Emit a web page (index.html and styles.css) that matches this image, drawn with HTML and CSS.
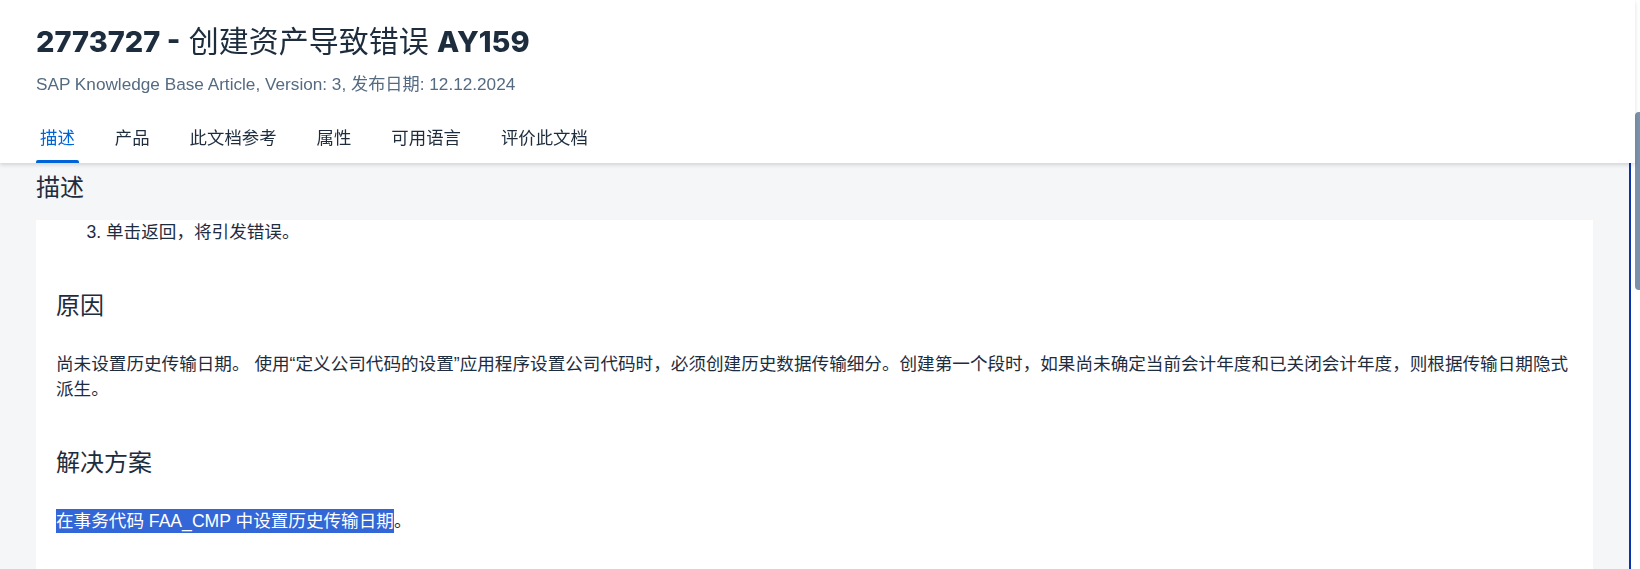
FILE: index.html
```html
<!DOCTYPE html>
<html lang="zh-CN">
<head>
    <meta charset="UTF-8">
    <title>2773727 - 创建资产导致错误 AY159</title>
    <link rel="stylesheet" href="styles.css">
</head>
<body>
    <header class="page-header">
        <h1 class="title"><span class="title-id">2773727 -</span> 创建资产导致错误 <span class="title-id">AY159</span></h1>
        <div class="subtitle">SAP Knowledge Base Article, Version: 3, 发布日期: 12.12.2024</div>
        <nav class="tabs">
            <a class="tab active">描述</a>
            <a class="tab">产品</a>
            <a class="tab">此文档参考</a>
            <a class="tab">属性</a>
            <a class="tab">可用语言</a>
            <a class="tab">评价此文档</a>
        </nav>
    </header>

    <main class="content">
        <h2 class="section-title">描述</h2>
        <div class="card">
            <ol class="steps" start="3">
                <li>单击返回，将引发错误。</li>
            </ol>

            <h3>原因</h3>
            <p>尚未设置历史传输日期。 使用“定义公司代码的设置”应用程序设置公司代码时，必须创建历史数据传输细分。创建第一个段时，如果尚未确定当前会计年度和已关闭会计年度，则根据传输日期隐式派生。</p>

            <h3>解决方案</h3>
            <p class="solution"><span class="selected">在事务代码 FAA_CMP 中设置历史传输日期</span>。</p>
        </div>
    </main>

    <div class="scroll-thumb"></div>
</body>
</html>
```
FILE: styles.css
```css
html, body { margin: 0; height: 100%; overflow: hidden; }
body {
    font-family: "Liberation Sans", "Noto Sans CJK SC", sans-serif;
    color: #1d2d3e;
    background-color: #ffffff;
}

.page-header {
    position: relative;
    z-index: 2;
    background-color: #fff;
    padding: 26px 0 0 36px;
    margin-right: 5px;
    box-shadow: 0 2px 4px rgba(0, 0, 0, 0.14);
}

.title {
    margin: 0;
    font-size: 30px;
    line-height: 32px;
    font-weight: normal;
    color: #1d2d3e;
}

.title-id {
    font-family: "Inter", "Liberation Sans", sans-serif;
    font-size: 29px;
    font-weight: 800;
}

.subtitle {
    margin-top: 16px;
    font-size: 17.2px;
    line-height: 20px;
    color: #556b82;
}

.tabs {
    display: flex;
    gap: 32px;
    margin-top: 32px;
}

.tab {
    position: relative;
    padding: 0 4px 13px;
    font-size: 17.4px;
    line-height: 24px;
    color: #1d2d3e;
    cursor: pointer;
}

.tab.active { color: #0064d9; }

.tab.active::after {
    content: "";
    position: absolute;
    left: 0;
    right: 0;
    bottom: 0;
    height: 3px;
    border-radius: 2px 2px 0 0;
    background-color: #0064d9;
}

.content {
    height: 100%;
    background-color: #f5f6f7;
    padding: 10px 36px 0 36px;
    margin-right: 9px;
    border-right: 2px solid #0a33a8;
}

.section-title {
    margin: 0 0 17px;
    font-size: 24px;
    line-height: 30px;
    font-weight: normal;
}

.card {
    background-color: #fff;
    padding: 0 20px;
    height: 600px;
    font-size: 17.6px;
    line-height: 25px;
}

.steps {
    margin: 0;
    padding-left: 50px;
}

.card h3 {
    margin: 46px 0 31px;
    font-size: 24px;
    line-height: 30px;
    font-weight: normal;
}

.card p { margin: 0; }

.selected {
    background-color: #3366d6;
    color: #fff;
    padding: 2px 0;
}

.scroll-thumb {
    position: fixed;
    top: 112px;
    right: 0;
    width: 5px;
    height: 178px;
    border-radius: 4px 0 0 4px;
    background-color: #7b90a9;
}
```
